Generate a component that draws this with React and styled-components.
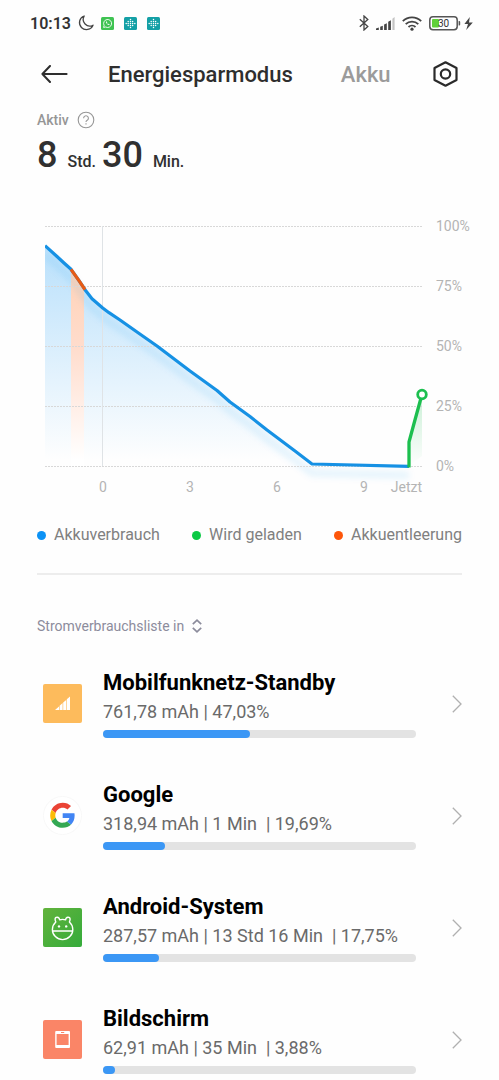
import React from 'react';
import styled, { createGlobalStyle } from 'styled-components';

const GlobalStyle = createGlobalStyle`
  * {
    box-sizing: border-box;
  }
  body {
    margin: 0;
    background: #fefefe;
    font-family: Roboto, 'Liberation Sans', sans-serif;
  }
  button {
    padding: 0;
    border: 0;
    background: none;
    font-family: inherit;
    cursor: pointer;
  }
  svg {
    display: block;
  }
`;

const StatusBar = styled.div`
  display: flex;
  align-items: center;
  justify-content: space-between;
  height: 46px;
  padding: 0 25px 0 30px;
`;
const StatusGroup = styled.div`
  display: flex;
  align-items: center;
  gap: 7px;
`;
const Clock = styled.span`
  font-size: 16px;
  font-weight: 600;
  color: #333;
`;
const AppBadges = styled.div`
  display: flex;
  gap: 10px;
`;

const Header = styled.header`
  display: flex;
  align-items: center;
  height: 56px;
  padding: 0 41px;
`;
const Tabs = styled.nav`
  display: flex;
  flex: 1;
  gap: 48px;
  margin-left: 40px;
  padding-top: 2px;
`;
const Tab = styled.button`
  font-size: 22px;
  line-height: 28px;
  font-weight: 500;
  color: ${({ $active }) => ($active ? '#2e2e2e' : '#9b9b9b')};
`;

const Summary = styled.section`
  padding: 8px 37px 0;
`;
const SummaryLabel = styled.div`
  display: flex;
  align-items: center;
  gap: 8px;
  height: 20px;
  font-size: 14px;
  font-weight: 500;
  color: #969696;
`;
const Duration = styled.div`
  display: flex;
  align-items: baseline;
  height: 50px;
  line-height: 50px;
`;
const Num = styled.span`
  font-size: 36px;
  font-weight: 500;
  color: #303030;
`;
const Unit = styled.span`
  margin: 0 6px 0 10px;
  font-size: 16px;
  font-weight: 500;
  color: #303030;
`;

const ChartArea = styled.section`
  margin-top: 30px;
`;
const ChartSvg = styled.svg`
  width: 100%;
  height: auto;
`;
const AxisText = styled.text`
  font-size: 14px;
  fill: #b4b4b4;
`;

const Legend = styled.ul`
  display: flex;
  justify-content: space-between;
  margin: 0 37px;
  padding: 13px 0 26px;
  border-bottom: 2px solid #ededed;
  list-style: none;
`;
const LegendItem = styled.li`
  display: flex;
  align-items: center;
  gap: 8px;
  font-size: 16px;
  line-height: 24px;
  color: #808080;
`;
const Dot = styled.span`
  width: 9px;
  height: 9px;
  border-radius: 50%;
  background: ${({ $color }) => $color};
`;

const SortButton = styled.button`
  display: flex;
  align-items: center;
  gap: 8px;
  margin: 41px 37px 33px;
  font-size: 14px;
  line-height: 20px;
  color: #8c8c9c;
`;

const List = styled.ul`
  display: flex;
  flex-direction: column;
  gap: 43px;
  margin: 0;
  padding: 0 37px 0 43px;
  list-style: none;
`;
const Row = styled.a`
  display: grid;
  grid-template-columns: 39px 1fr 10px;
  align-items: center;
  text-decoration: none;
`;
const RowBody = styled.div`
  margin: 0 36px 0 21px;
`;
const Name = styled.div`
  font-size: 22px;
  line-height: 28px;
  font-weight: 700;
  color: #000;
`;
const Usage = styled.div`
  margin: 3px 0 6px;
  font-size: 18px;
  line-height: 24px;
  color: #6a6a6a;
  white-space: pre;
`;
const Track = styled.div`
  height: 8px;
  border-radius: 4px;
  background: #e3e3e3;
`;
const Fill = styled.div`
  height: 8px;
  border-radius: 4px;
  background: #3b97f5;
`;

const MoonIcon = () => (
  <svg width='16' height='16' viewBox='0 0 16 16' fill='none' stroke='#444' strokeWidth='1.3' strokeLinejoin='round'>
    <path d='M6.2 1A7 7 0 1 0 15 10.2 6.6 6.6 0 0 1 6.2 1z' />
  </svg>
);

const ChatBadge = () => (
  <svg width='13' height='13' viewBox='0 0 13 13' fill='none'>
    <rect width='13' height='13' rx='1.5' fill='#3fc352' />
    <path d='M2.6 10.4l.5-2A4 4 0 1 1 4.7 10z' stroke='#fff' strokeWidth='0.9' />
    <path d='M5 4.6c-.3 1.6 1.5 3.6 3.3 3.5l.3-.8-1-.6-.5.4c-.6-.2-1-.7-1.2-1.2l.4-.5-.5-1z' fill='#fff' />
  </svg>
);

const fitDots = [
  [2.2, 6.5], [4.2, 6.5], [6.5, 6.5], [8.6, 6.5], [10.8, 6.5],
  [4.2, 4.6], [6.5, 4.6], [8.6, 4.6], [4.2, 8.4], [6.5, 8.4], [8.6, 8.4],
  [6.5, 2.6], [6.5, 10.4],
];
const FitBadge = () => (
  <svg width='13' height='13' viewBox='0 0 13 13'>
    <rect width='13' height='13' rx='1.5' fill='#14a0a6' />
    {fitDots.map(([x, y]) => (
      <circle key={`${x}-${y}`} cx={x} cy={y} r='0.75' fill='#fff' />
    ))}
  </svg>
);

const BluetoothIcon = () => (
  <svg width='10' height='16' viewBox='0 0 10 16' fill='none' stroke='#444' strokeWidth='1.3'>
    <path d='M.8 4.3l8 7.2L5 15V1l3.8 3.5-8 7.2' />
  </svg>
);

const SignalIcon = () => (
  <svg width='19' height='13' viewBox='0 0 19 13' fill='#444'>
    <path d='M0 13v-1.4l2.8-1V13zM4.2 13V9.8l2.6-1V13zM8.1 13V7.6l2.7-1.3V13zM12.2 13V4.8l2.7-1.6V13z' />
    <path d='M16.4 13V1.8L18.6 0v13z' fill='#c4c4c4' />
  </svg>
);

const WifiIcon = () => (
  <svg width='20' height='15' viewBox='0 0 20 15' fill='none' stroke='#444' strokeWidth='1.8'>
    <path d='M.8 5.2a13 13 0 0 1 18.4 0M3.7 8.1a9 9 0 0 1 12.6 0M6.5 11a5 5 0 0 1 7 0' />
    <circle cx='10' cy='13.2' r='1.6' fill='#444' stroke='none' />
  </svg>
);

const BatteryIcon = () => (
  <svg width='45' height='15' viewBox='0 0 45 15'>
    <rect x='0.8' y='0.8' width='27.4' height='13' rx='3.2' fill='none' stroke='#555' strokeWidth='1.5' />
    <rect x='3' y='3' width='7' height='8.6' rx='1' fill='#5fd038' />
    <path d='M29.6 5h.6q1 0 1 1v2.6q0 1-1 1h-.6z' fill='#555' />
    <text x='14.5' y='11' fontSize='10' textAnchor='middle' fill='#333'>30</text>
    <path d='M40.8 1l-5.4 7h3.6l-1.8 6 6.6-7.4h-3.8z' fill='#444' />
  </svg>
);

const ArrowIcon = () => (
  <svg width='27' height='18' viewBox='0 0 27 18' fill='none' stroke='#2e2e2e' strokeWidth='2' strokeLinecap='round' strokeLinejoin='round'>
    <path d='M9 1L1.4 9 9 17M1.4 9H25.6' />
  </svg>
);

const SettingsIcon = () => (
  <svg width='25' height='26' viewBox='0 0 25 26' fill='none' stroke='#2a2a2a' strokeWidth='2.2' strokeLinejoin='round'>
    <path d='M12.5 1.3l11 5.7v12l-11 5.7-11-5.7V7z' />
    <circle cx='12.5' cy='13' r='4.7' />
  </svg>
);

const HelpIcon = () => (
  <svg width='18' height='18' viewBox='0 0 18 18' fill='none' stroke='#969696' strokeWidth='1.1'>
    <circle cx='9' cy='9' r='7.8' />
    <path d='M6.6 7.2a2.4 2.4 0 1 1 3.6 2.1c-.9.5-1.2.9-1.2 1.8M9 12.2v1.3' />
  </svg>
);

const SortIcon = () => (
  <svg width='10' height='14' viewBox='0 0 10 14' fill='none' stroke='#8c8c9c' strokeWidth='1.7'>
    <path d='M.8 5.2L5 1.2l4.2 4M.8 8.8l4.2 4 4.2-4' />
  </svg>
);

const ChevronIcon = () => (
  <svg width='10' height='18' viewBox='0 0 10 18' fill='none' stroke='#b0b0b0' strokeWidth='1.3'>
    <path d='M.8 .8L9 9 .8 17.2' />
  </svg>
);

const NetworkIcon = () => (
  <svg width='39' height='39' viewBox='0 0 39 39'>
    <rect width='39' height='39' rx='2' fill='#fdbb5c' />
    <path d='M12 26l4-3.6V26zM16.6 26v-4.2l3-2.7V26zM20.2 26v-7.4l3-2.7V26zM23.8 26V15.2l3.2-2.8V26z' fill='#fff' />
  </svg>
);

const GoogleIcon = () => (
  <svg width='39' height='39' viewBox='0 0 39 39'>
    <circle cx='19.5' cy='19.5' r='19' fill='#fff' stroke='#f8f8f8' />
    <g transform='translate(7.2 6.8) scale(0.52)'>
      <path fill='#ea4335' d='M24 9.5c3.54 0 6.71 1.22 9.21 3.6l6.85-6.85C35.9 2.38 30.47 0 24 0 14.62 0 6.51 5.38 2.56 13.22l7.98 6.19C12.43 13.72 17.74 9.5 24 9.5z' />
      <path fill='#4285f4' d='M46.98 24.55c0-1.57-.15-3.09-.38-4.55H24v9.02h12.94c-.58 2.96-2.26 5.48-4.78 7.18l7.73 6c4.51-4.18 7.09-10.36 7.09-17.65z' />
      <path fill='#fbbc05' d='M10.53 28.59c-.48-1.45-.76-2.99-.76-4.59s.27-3.14.76-4.59l-7.98-6.19C.92 16.46 0 20.12 0 24c0 3.88.92 7.54 2.56 10.78l7.97-6.19z' />
      <path fill='#34a853' d='M24 48c6.48 0 11.93-2.13 15.89-5.81l-7.73-6c-2.15 1.45-4.92 2.3-8.16 2.3-6.26 0-11.57-4.22-13.47-9.91l-7.98 6.19C6.51 42.62 14.62 48 24 48z' />
    </g>
  </svg>
);

const AndroidIcon = () => (
  <svg width='39' height='39' viewBox='0 0 39 39' fill='none'>
    <defs>
      <linearGradient id='android' x1='0' y1='0' x2='1' y2='1'>
        <stop offset='0' stopColor='#62b33c' />
        <stop offset='1' stopColor='#35ab3b' />
      </linearGradient>
    </defs>
    <rect width='39' height='39' rx='2' fill='url(#android)' />
    <path
      d='M16.6 11.8Q19.6 10.9 22.6 11.8C22.9 8.6 27.2 8.4 27.1 11.2Q27 12.6 26.4 14A10.3 10.3 0 0 1 29.8 21.4A10.2 10.2 0 0 1 9.4 21.4A10.3 10.3 0 0 1 12.8 14Q12.2 12.6 12.1 11.2C12 8.4 16.3 8.6 16.6 11.8zM9.6 23H29.6'
      stroke='#fff'
      strokeWidth='1.4'
      strokeLinejoin='round'
    />
    <circle cx='16' cy='18.4' r='1.2' fill='#fff' />
    <circle cx='23.2' cy='18.4' r='1.2' fill='#fff' />
  </svg>
);

const ScreenIcon = () => (
  <svg width='39' height='39' viewBox='0 0 39 39'>
    <rect width='39' height='39' rx='2' fill='#fa8567' />
    <rect x='12.2' y='11' width='14.8' height='17' rx='1' fill='#fff' />
    <path d='M13.6 14h12v11h-12zM18 12h3.2v.9H18z' fill='#fa8567' />
  </svg>
);

const gridLines = [
  { y: 16, label: '100%' },
  { y: 76, label: '75%' },
  { y: 136, label: '50%' },
  { y: 196, label: '25%' },
  { y: 256, label: '0%' },
];
const hours = [
  { x: 103, label: '0' },
  { x: 190, label: '3' },
  { x: 277, label: '6' },
  { x: 364, label: '9' },
];
const usageLine =
  '45,35.7 57,46.5 64,53 71,59.3 79,70.7 85,79.7 92,88.7 102.7,98 109,102.7 120,110 137,122 157,136 190,161 217,180.5 230,192 250,206.5 267,220 295,241 312,254 409,256.3';

function Chart() {
  return (
    <ChartArea>
      <ChartSvg viewBox='0 0 499 300' role='img' aria-label='Akkuverbrauch'>
        <defs>
          <linearGradient id='blue' gradientUnits='userSpaceOnUse' x1='0' y1='40' x2='0' y2='250'>
            <stop offset='0' stopColor='#1c9cf5' stopOpacity='0.3' />
            <stop offset='1' stopColor='#1c9cf5' stopOpacity='0' />
          </linearGradient>
          <linearGradient id='orange' gradientUnits='userSpaceOnUse' x1='0' y1='60' x2='0' y2='250'>
            <stop offset='0' stopColor='#ffd3b8' />
            <stop offset='0.4' stopColor='#ffdccc' />
            <stop offset='1' stopColor='#fff' />
          </linearGradient>
          <linearGradient id='green' x1='0' y1='0' x2='0' y2='1'>
            <stop offset='0' stopColor='#1cbf4f' stopOpacity='0.22' />
            <stop offset='1' stopColor='#1cbf4f' stopOpacity='0' />
          </linearGradient>
          <filter id='soft' x='-10%' y='-10%' width='120%' height='130%'>
            <feGaussianBlur stdDeviation='3' />
          </filter>
          <clipPath id='plot'>
            <rect x='45' y='0' width='377' height='280' />
          </clipPath>
        </defs>
        <polygon points={`${usageLine} 45,256`} fill='url(#blue)' />
        <polygon points='71,59 79,71 84,79 84,256 71,256' fill='url(#orange)' />
        <polygon points='409,232 414,213 422,189 422,246 409,256' fill='url(#green)' />
        <g clipPath='url(#plot)'>
          <polyline points={usageLine} transform='translate(0 9)' fill='none' stroke='#1795f0' strokeOpacity='0.1' strokeWidth='7' filter='url(#soft)' />
        </g>
        {gridLines.map(({ y, label }) => (
          <g key={label}>
            <path d={`M45 ${y + 0.5}H422`} stroke='#d8d8d8' strokeDasharray='2 1' />
            <AxisText x='436' y={y + 5}>{label}</AxisText>
          </g>
        ))}
        <path d='M102.5 16V256' stroke='#dfe3e6' />
        <g clipPath='url(#plot)'>
          <polyline points={usageLine} fill='none' stroke='#1691e4' strokeWidth='3.2' strokeLinejoin='round' />
        </g>
        <polyline points='71,59.3 79,70.7 85,79.7' fill='none' stroke='#e85b14' strokeWidth='3.2' />
        <polyline points='409,257.5 409,232 414,213.5 421,188' fill='none' stroke='#1cbf4f' strokeWidth='3.3' strokeLinejoin='round' />
        <circle cx='422' cy='184.5' r='4.3' fill='#fff' stroke='#1cbf4f' strokeWidth='2.8' />
        {hours.map(({ x, label }) => (
          <AxisText key={label} x={x} y='282' textAnchor='middle'>{label}</AxisText>
        ))}
        <AxisText x='422' y='282' textAnchor='end'>Jetzt</AxisText>
      </ChartSvg>
    </ChartArea>
  );
}

const legends = [
  { color: '#0c92f5', label: 'Akkuverbrauch' },
  { color: '#0bc944', label: 'Wird geladen' },
  { color: '#fd560a', label: 'Akkuentleerung' },
];

const apps = [
  { id: 1, name: 'Mobilfunknetz-Standby', usage: '761,78 mAh | 47,03%', percent: 47.03, Icon: NetworkIcon },
  { id: 2, name: 'Google', usage: '318,94 mAh | 1 Min  | 19,69%', percent: 19.69, Icon: GoogleIcon },
  { id: 3, name: 'Android-System', usage: '287,57 mAh | 13 Std 16 Min  | 17,75%', percent: 17.75, Icon: AndroidIcon },
  { id: 4, name: 'Bildschirm', usage: '62,91 mAh | 35 Min  | 3,88%', percent: 3.88, Icon: ScreenIcon },
];

export default function App() {
  return (
    <>
      <GlobalStyle />
      <StatusBar>
        <StatusGroup>
          <Clock>10:13</Clock>
          <MoonIcon />
          <AppBadges>
            <ChatBadge />
            <FitBadge />
            <FitBadge />
          </AppBadges>
        </StatusGroup>
        <StatusGroup>
          <BluetoothIcon />
          <SignalIcon />
          <WifiIcon />
          <BatteryIcon />
        </StatusGroup>
      </StatusBar>
      <Header>
        <button type='button' aria-label='Zurück'>
          <ArrowIcon />
        </button>
        <Tabs>
          <Tab type='button' $active>Energiesparmodus</Tab>
          <Tab type='button'>Akku</Tab>
        </Tabs>
        <button type='button' aria-label='Einstellungen'>
          <SettingsIcon />
        </button>
      </Header>
      <main>
        <Summary>
          <SummaryLabel>
            Aktiv
            <button type='button' aria-label='Hilfe'>
              <HelpIcon />
            </button>
          </SummaryLabel>
          <Duration>
            <Num>8</Num>
            <Unit>Std.</Unit>
            <Num>30</Num>
            <Unit>Min.</Unit>
          </Duration>
        </Summary>
        <Chart />
        <Legend>
          {legends.map(({ color, label }) => (
            <LegendItem key={label}>
              <Dot $color={color} />
              {label}
            </LegendItem>
          ))}
        </Legend>
        <SortButton type='button'>
          Stromverbrauchsliste in
          <SortIcon />
        </SortButton>
        <List>
          {apps.map(({ id, name, usage, percent, Icon }) => (
            <li key={id}>
              <Row href='#'>
                <Icon />
                <RowBody>
                  <Name>{name}</Name>
                  <Usage>{usage}</Usage>
                  <Track>
                    <Fill style={{ width: `${percent}%` }} />
                  </Track>
                </RowBody>
                <ChevronIcon />
              </Row>
            </li>
          ))}
        </List>
      </main>
    </>
  );
}
